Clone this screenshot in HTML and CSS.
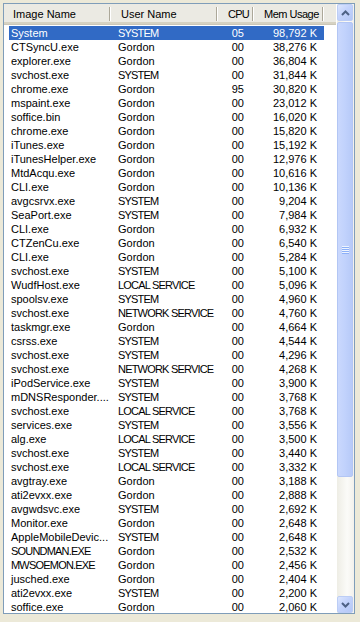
FILE: index.html
```html
<!DOCTYPE html>
<html>
<head>
<meta charset="utf-8">
<link rel="stylesheet" href="styles.css">
</head>
<body>
<div class="listbox">
  <div class="main">
    <div class="header">
      <div class="hcell c1">Image Name</div>
      <div class="hcell c2">User Name</div>
      <div class="hcell c3 caps">CPU</div>
      <div class="hcell c4">Mem Usage</div>
      <div class="hcell c5"></div>
    </div>
    <div class="rows">
      <div class="row sel"><span class="n">System</span><span class="u caps">SYSTEM</span><span class="p">05</span><span class="m">98,792 K</span></div>
      <div class="row"><span class="n">CTSyncU.exe</span><span class="u">Gordon</span><span class="p">00</span><span class="m">38,276 K</span></div>
      <div class="row"><span class="n">explorer.exe</span><span class="u">Gordon</span><span class="p">00</span><span class="m">36,804 K</span></div>
      <div class="row"><span class="n">svchost.exe</span><span class="u caps">SYSTEM</span><span class="p">00</span><span class="m">31,844 K</span></div>
      <div class="row"><span class="n">chrome.exe</span><span class="u">Gordon</span><span class="p">95</span><span class="m">30,820 K</span></div>
      <div class="row"><span class="n">mspaint.exe</span><span class="u">Gordon</span><span class="p">00</span><span class="m">23,012 K</span></div>
      <div class="row"><span class="n">soffice.bin</span><span class="u">Gordon</span><span class="p">00</span><span class="m">16,020 K</span></div>
      <div class="row"><span class="n">chrome.exe</span><span class="u">Gordon</span><span class="p">00</span><span class="m">15,820 K</span></div>
      <div class="row"><span class="n">iTunes.exe</span><span class="u">Gordon</span><span class="p">00</span><span class="m">15,192 K</span></div>
      <div class="row"><span class="n">iTunesHelper.exe</span><span class="u">Gordon</span><span class="p">00</span><span class="m">12,976 K</span></div>
      <div class="row"><span class="n">MtdAcqu.exe</span><span class="u">Gordon</span><span class="p">00</span><span class="m">10,616 K</span></div>
      <div class="row"><span class="n">CLI.exe</span><span class="u">Gordon</span><span class="p">00</span><span class="m">10,136 K</span></div>
      <div class="row"><span class="n">avgcsrvx.exe</span><span class="u caps">SYSTEM</span><span class="p">00</span><span class="m">9,204 K</span></div>
      <div class="row"><span class="n">SeaPort.exe</span><span class="u caps">SYSTEM</span><span class="p">00</span><span class="m">7,984 K</span></div>
      <div class="row"><span class="n">CLI.exe</span><span class="u">Gordon</span><span class="p">00</span><span class="m">6,932 K</span></div>
      <div class="row"><span class="n">CTZenCu.exe</span><span class="u">Gordon</span><span class="p">00</span><span class="m">6,540 K</span></div>
      <div class="row"><span class="n">CLI.exe</span><span class="u">Gordon</span><span class="p">00</span><span class="m">5,284 K</span></div>
      <div class="row"><span class="n">svchost.exe</span><span class="u caps">SYSTEM</span><span class="p">00</span><span class="m">5,100 K</span></div>
      <div class="row"><span class="n">WudfHost.exe</span><span class="u caps">LOCAL SERVICE</span><span class="p">00</span><span class="m">5,096 K</span></div>
      <div class="row"><span class="n">spoolsv.exe</span><span class="u caps">SYSTEM</span><span class="p">00</span><span class="m">4,960 K</span></div>
      <div class="row"><span class="n">svchost.exe</span><span class="u caps">NETWORK SERVICE</span><span class="p">00</span><span class="m">4,760 K</span></div>
      <div class="row"><span class="n">taskmgr.exe</span><span class="u">Gordon</span><span class="p">00</span><span class="m">4,664 K</span></div>
      <div class="row"><span class="n">csrss.exe</span><span class="u caps">SYSTEM</span><span class="p">00</span><span class="m">4,544 K</span></div>
      <div class="row"><span class="n">svchost.exe</span><span class="u caps">SYSTEM</span><span class="p">00</span><span class="m">4,296 K</span></div>
      <div class="row"><span class="n">svchost.exe</span><span class="u caps">NETWORK SERVICE</span><span class="p">00</span><span class="m">4,268 K</span></div>
      <div class="row"><span class="n">iPodService.exe</span><span class="u caps">SYSTEM</span><span class="p">00</span><span class="m">3,900 K</span></div>
      <div class="row"><span class="n">mDNSResponder....</span><span class="u caps">SYSTEM</span><span class="p">00</span><span class="m">3,768 K</span></div>
      <div class="row"><span class="n">svchost.exe</span><span class="u caps">LOCAL SERVICE</span><span class="p">00</span><span class="m">3,768 K</span></div>
      <div class="row"><span class="n">services.exe</span><span class="u caps">SYSTEM</span><span class="p">00</span><span class="m">3,556 K</span></div>
      <div class="row"><span class="n">alg.exe</span><span class="u caps">LOCAL SERVICE</span><span class="p">00</span><span class="m">3,500 K</span></div>
      <div class="row"><span class="n">svchost.exe</span><span class="u caps">SYSTEM</span><span class="p">00</span><span class="m">3,440 K</span></div>
      <div class="row"><span class="n">svchost.exe</span><span class="u caps">LOCAL SERVICE</span><span class="p">00</span><span class="m">3,332 K</span></div>
      <div class="row"><span class="n">avgtray.exe</span><span class="u">Gordon</span><span class="p">00</span><span class="m">3,188 K</span></div>
      <div class="row"><span class="n">ati2evxx.exe</span><span class="u">Gordon</span><span class="p">00</span><span class="m">2,888 K</span></div>
      <div class="row"><span class="n">avgwdsvc.exe</span><span class="u caps">SYSTEM</span><span class="p">00</span><span class="m">2,692 K</span></div>
      <div class="row"><span class="n">Monitor.exe</span><span class="u">Gordon</span><span class="p">00</span><span class="m">2,648 K</span></div>
      <div class="row"><span class="n">AppleMobileDevic...</span><span class="u caps">SYSTEM</span><span class="p">00</span><span class="m">2,648 K</span></div>
      <div class="row"><span class="n caps">SOUNDMAN.EXE</span><span class="u">Gordon</span><span class="p">00</span><span class="m">2,532 K</span></div>
      <div class="row"><span class="n caps">MWSOEMON.EXE</span><span class="u">Gordon</span><span class="p">00</span><span class="m">2,456 K</span></div>
      <div class="row"><span class="n">jusched.exe</span><span class="u">Gordon</span><span class="p">00</span><span class="m">2,404 K</span></div>
      <div class="row"><span class="n">ati2evxx.exe</span><span class="u caps">SYSTEM</span><span class="p">00</span><span class="m">2,200 K</span></div>
      <div class="row"><span class="n">soffice.exe</span><span class="u">Gordon</span><span class="p">00</span><span class="m">2,060 K</span></div>
    </div>
  </div>
  <div class="scrollbar">
    <div class="btn"><svg width="9" height="6" viewBox="0 0 9 6"><path d="M1 5 L4.5 1.5 L8 5" fill="none" stroke="#4D6185" stroke-width="2"/></svg></div>
    <div class="thumb"><div class="grip"></div></div>
    <div class="track"></div>
    <div class="btn"><svg width="9" height="6" viewBox="0 0 9 6"><path d="M1 1 L4.5 4.5 L8 1" fill="none" stroke="#4D6185" stroke-width="2"/></svg></div>
  </div>
</div>
</body>
</html>
```

FILE: styles.css
```css
html, body {
  margin: 0;
  padding: 0;
}
body {
  width: 360px;
  height: 622px;
  background: #ECE9D8;
  font-family: "Liberation Sans", Arial, sans-serif;
  font-size: 11px;
  color: #000;
  overflow: hidden;
}
.listbox {
  margin: 3px 0 0 3px;
  width: 350px;
  height: 609px;
  border: 1px solid #7F9DB9;
  background: #fff;
  display: flex;
  overflow: hidden;
}
.main {
  width: 332px;
  display: flex;
  flex-direction: column;
  overflow: hidden;
}
.header {
  height: 21px;
  display: flex;
  background: #EBEAE3;
  box-sizing: border-box;
  border-bottom: 1px solid #CBC7B8;
  box-shadow: inset 0 -2px 0 #D6D2C2, inset 0 -1px 0 #E2DECD;
  flex: none;
}
.hcell {
  box-sizing: border-box;
  height: 20px;
  line-height: 19px;
  padding-top: 1px;
  white-space: nowrap;
}
.hcell.c1, .hcell.c2, .hcell.c3, .hcell.c4 {
  background-image: linear-gradient(#ACA899, #ACA899), linear-gradient(#fff, #fff);
  background-size: 1px 14px, 1px 14px;
  background-position: right 1px top 3px, right 0 top 3px;
  background-repeat: no-repeat;
}
.c1 { width: 107px; padding-left: 9px; }
.c2 { width: 107px; padding-left: 10px; }
.c3 { width: 36px; padding-left: 10px; }
.c4 { width: 70px; padding-left: 10px; letter-spacing: -0.5px; }
.c5 { flex: 1; }
.caps {
  letter-spacing: -0.8px;
}
.rows {
  padding-top: 1px;
}
.row {
  display: flex;
  height: 14px;
  line-height: 14px;
  margin-left: 5px;
  width: 315px;
  white-space: nowrap;
}
.row.sel {
  background: #316AC5;
  color: #fff;
}
.row span {
  overflow: hidden;
  box-sizing: border-box;
}
.n { width: 102px; padding-left: 2px; }
.u { width: 107px; padding-left: 7px; }
.p { width: 36px; text-align: right; padding-right: 10px; }
.m { width: 70px; text-align: right; padding-right: 7px; }
.scrollbar {
  width: 17px;
  margin-left: 1px;
  display: flex;
  flex-direction: column;
  background: linear-gradient(to right, #EEEDE5, #FBFBF8 60%, #F3F1EC);
}
.btn {
  height: 17px;
  flex: none;
  box-sizing: border-box;
  margin: 0 1px 0 0;
  border: 1px solid #BCCDF5;
  border-radius: 2px;
  background: linear-gradient(135deg, #DCE6FE, #C3D3FC 45%, #B4C7F6);
  display: flex;
  align-items: center;
  justify-content: center;
}
.thumb {
  height: 455px;
  flex: none;
  box-sizing: border-box;
  margin: 1px 1px 0 0;
  border: 1px solid #B3C6F4;
  border-radius: 2px;
  background: linear-gradient(to right, #CAD8FD, #C1D2FC 50%, #B7CAF8);
  display: flex;
  align-items: center;
  justify-content: center;
}
.grip {
  width: 7px;
  height: 8px;
  background: repeating-linear-gradient(to bottom, #EEF4FE 0, #EEF4FE 1px, #8CB0F8 1px, #8CB0F8 2px);
}
.track {
  flex: 1;
}
```
